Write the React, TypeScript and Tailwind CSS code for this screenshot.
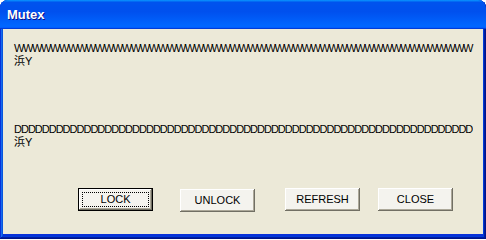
import React from 'react';

const font = { fontFamily: '"Liberation Sans", "Noto Sans CJK SC", sans-serif' };

function XpButton({ label, primary, className }: { label: string; primary?: boolean; className?: string }) {
  const base = "w-[75px] h-[23px] text-[11px] leading-none text-black bg-[#f4f3ee] flex items-center justify-center";
  if (primary) {
    return (
      <button
        className={`${base} border border-black shadow-[inset_-1px_-1px_#716f64,inset_1px_1px_#fff,inset_-2px_-2px_#aca899] outline-1 outline-dotted outline-black outline-offset-[-5px] ${className ?? ""}`}
        style={font}
      >
        {label}
      </button>
    );
  }
  return (
    <button
      className={`${base} shadow-[inset_-1px_-1px_#716f64,inset_1px_1px_#fff,inset_-2px_-2px_#aca899] ${className ?? ""}`}
      style={font}
    >
      {label}
    </button>
  );
}

export default function App() {
  const ws = "W".repeat(51);
  const ds = "D".repeat(66);

  return (
    <div className="w-[486px] h-[239px] bg-white">
      <div className="w-full h-full rounded-t-[8px] overflow-hidden flex flex-col bg-[#0831d9] shadow-[inset_-1px_-1px_#00138c,inset_1px_1px_#0831d9,inset_-2px_-2px_#001ea0,inset_2px_2px_#166aee,inset_-3px_-3px_#003bda,inset_3px_3px_#0855dd]">
        {/* title bar */}
        <div className="h-[29px] shrink-0 flex items-center pl-[7px] bg-[linear-gradient(180deg,#0997ff,#0053ee_8%,#0050ee_40%,#0066ff_88%,#0066ff_93%,#005bff_95%,#003dd7_96%,#003dd7)]">
          <span
            className="text-[13px] font-bold text-white [text-shadow:1px_1px_#0f1089] mt-[1px]"
            style={font}
          >
            Mutex
          </span>
        </div>
        {/* client */}
        <div className="flex-1 flex px-[3px] pb-[5px]">
          <div className="flex-1 bg-[#ece9d8] flex flex-col pt-[13px] pl-[11px]" style={font}>
            <div className="w-[459px] text-[11px] leading-[13px] text-black">
              <div className="tracking-[-1.4px] whitespace-nowrap">{ws}</div>
              <div>浜Y</div>
            </div>
            <div className="w-[459px] overflow-hidden text-[11px] leading-[13px] text-black mt-[55px]">
              <div className="tracking-[-1px] break-all h-[13px]">{ds}</div>
              <div>浜Y</div>
            </div>
            <div className="flex mt-[39px]">
              <XpButton label="LOCK" primary className="ml-[64px]" />
              <XpButton label="UNLOCK" className="ml-[27px] mt-[1px]" />
              <XpButton label="REFRESH" className="ml-[30px]" />
              <XpButton label="CLOSE" className="ml-[18px]" />
            </div>
          </div>
        </div>
      </div>
    </div>
  );
}
